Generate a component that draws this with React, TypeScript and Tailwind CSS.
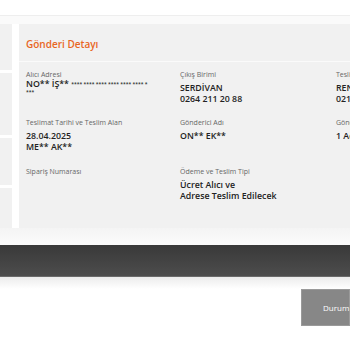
import React from "react";

const Label = ({ children }: { children: React.ReactNode }) => (
  <div className="text-[7px] leading-[9px] text-[#666] whitespace-nowrap">{children}</div>
);
const Value = ({ children }: { children: React.ReactNode }) => (
  <div className="mt-[4px] text-[8.8px] leading-[11px] font-semibold text-[#222] whitespace-nowrap">{children}</div>
);

export default function App() {
  return (
    <div className="w-[350px] h-[350px] overflow-hidden bg-white" style={{ fontFamily: '"Open Sans", "Noto Sans", sans-serif' }}>
      <div className="h-[15px] bg-white" />
      <div className="h-[9px] bg-[#fafafa] border-t border-[#eee]" />
      <div className="flex h-[204px]">
        <div className="w-[12px] shrink-0 flex flex-col gap-[3px]">
          <div className="h-[46px] bg-[#f1f1f1]" />
          <div className="h-[62px] bg-[#f1f1f1]" />
          <div className="h-[47px] bg-[#f1f1f1]" />
          <div className="flex-1 bg-[#f1f1f1]" />
        </div>
        <div className="w-[7px] shrink-0 bg-white" />
        <div className="flex-1 min-w-0 overflow-hidden bg-[#f1f1f1] flex flex-col">
          <div className="h-[38px] shrink-0 flex items-center pl-[7px] border-b border-[#fafafa]">
            <span className="text-[10px] font-semibold text-[#e8661f] pt-[4px]">Gönderi Detayı</span>
          </div>
          <div className="grid grid-cols-[154px_156px_100px] grid-rows-[48px_49px_50px] pl-[7px] pt-[8px]">
            <div>
              <Label>Alıcı Adresi</Label>
              <div className="mt-[1px] text-[8.8px] leading-[9px] font-semibold text-[#222] whitespace-nowrap">NO** İŞ** <span className="text-[5px] align-top">**** **** **** **** **** **** *</span></div>
              <div className="text-[5px] leading-[7px] font-semibold text-[#222]">***</div>
            </div>
            <div>
              <Label>Çıkış Birimi</Label>
              <Value>SERDİVAN<br />0264 211 20 88</Value>
            </div>
            <div>
              <Label>Teslim Birimi</Label>
              <Value>RENK<br />0216</Value>
            </div>
            <div>
              <Label>Teslimat Tarihi ve Teslim Alan</Label>
              <Value>28.04.2025<br />ME** AK**</Value>
            </div>
            <div>
              <Label>Gönderici Adı</Label>
              <Value>ON** EK**</Value>
            </div>
            <div>
              <Label>Gönderi Adedi</Label>
              <Value>1 Adet</Value>
            </div>
            <div>
              <Label>Sipariş Numarası</Label>
            </div>
            <div>
              <Label>Ödeme ve Teslim Tipi</Label>
              <Value>Ücret Alıcı ve<br />Adrese Teslim Edilecek</Value>
            </div>
            <div />
          </div>
        </div>
      </div>
      <div className="h-[17px] bg-gradient-to-b from-[#f4f4f4] to-[#fbfbfb]" />
      <div className="h-[32px] bg-gradient-to-b from-[#393939] to-[#4d4d4d] border-b border-[#6a6a6a]" />
      <div className="h-[12px] bg-gradient-to-b from-[#ececec] to-white" />
      <div className="flex justify-end">
        <div className="w-[49px] h-[37px] bg-[#878787] border border-[#9a9a9a] flex items-center pl-[21px] text-[8px] text-white whitespace-nowrap">
          Durum
        </div>
      </div>
    </div>
  );
}
